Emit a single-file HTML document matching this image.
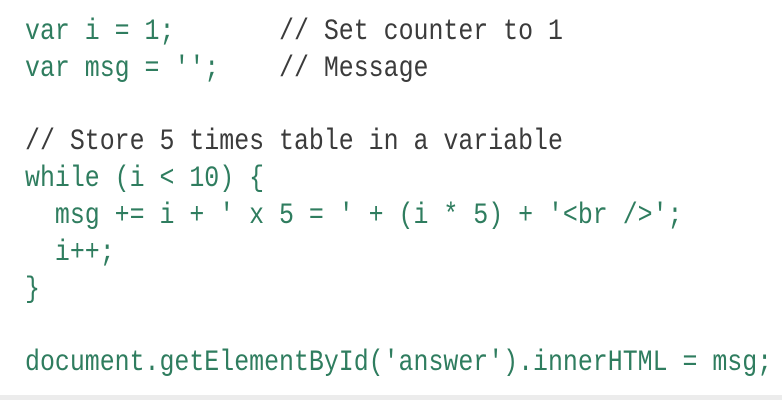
<!DOCTYPE html>
<html><head><style>
html,body{margin:0;padding:0;background:#fff;width:782px;height:400px;overflow:hidden}
pre{position:absolute;left:25px;top:14px;margin:0;font-family:"Liberation Mono",monospace;font-size:30px;line-height:36.8px;color:#2f7d5f;transform:scaleX(0.83);transform-origin:0 0}
.c{color:#3b3b3b}
.bar{position:absolute;left:0;right:0;top:395px;height:5px;background:#ececec}
</style></head><body>
<pre>var i = 1;       <span class="c">// Set counter to 1</span>
var msg = '';    <span class="c">// Message</span>

<span class="c">// Store 5 times table in a variable</span>
while (i &lt; 10) {
  msg += i + ' x 5 = ' + (i * 5) + '&lt;br /&gt;';
  i++;
}

document.getElementById('answer').innerHTML = msg;</pre>
<div class="bar"></div>
</body></html>
